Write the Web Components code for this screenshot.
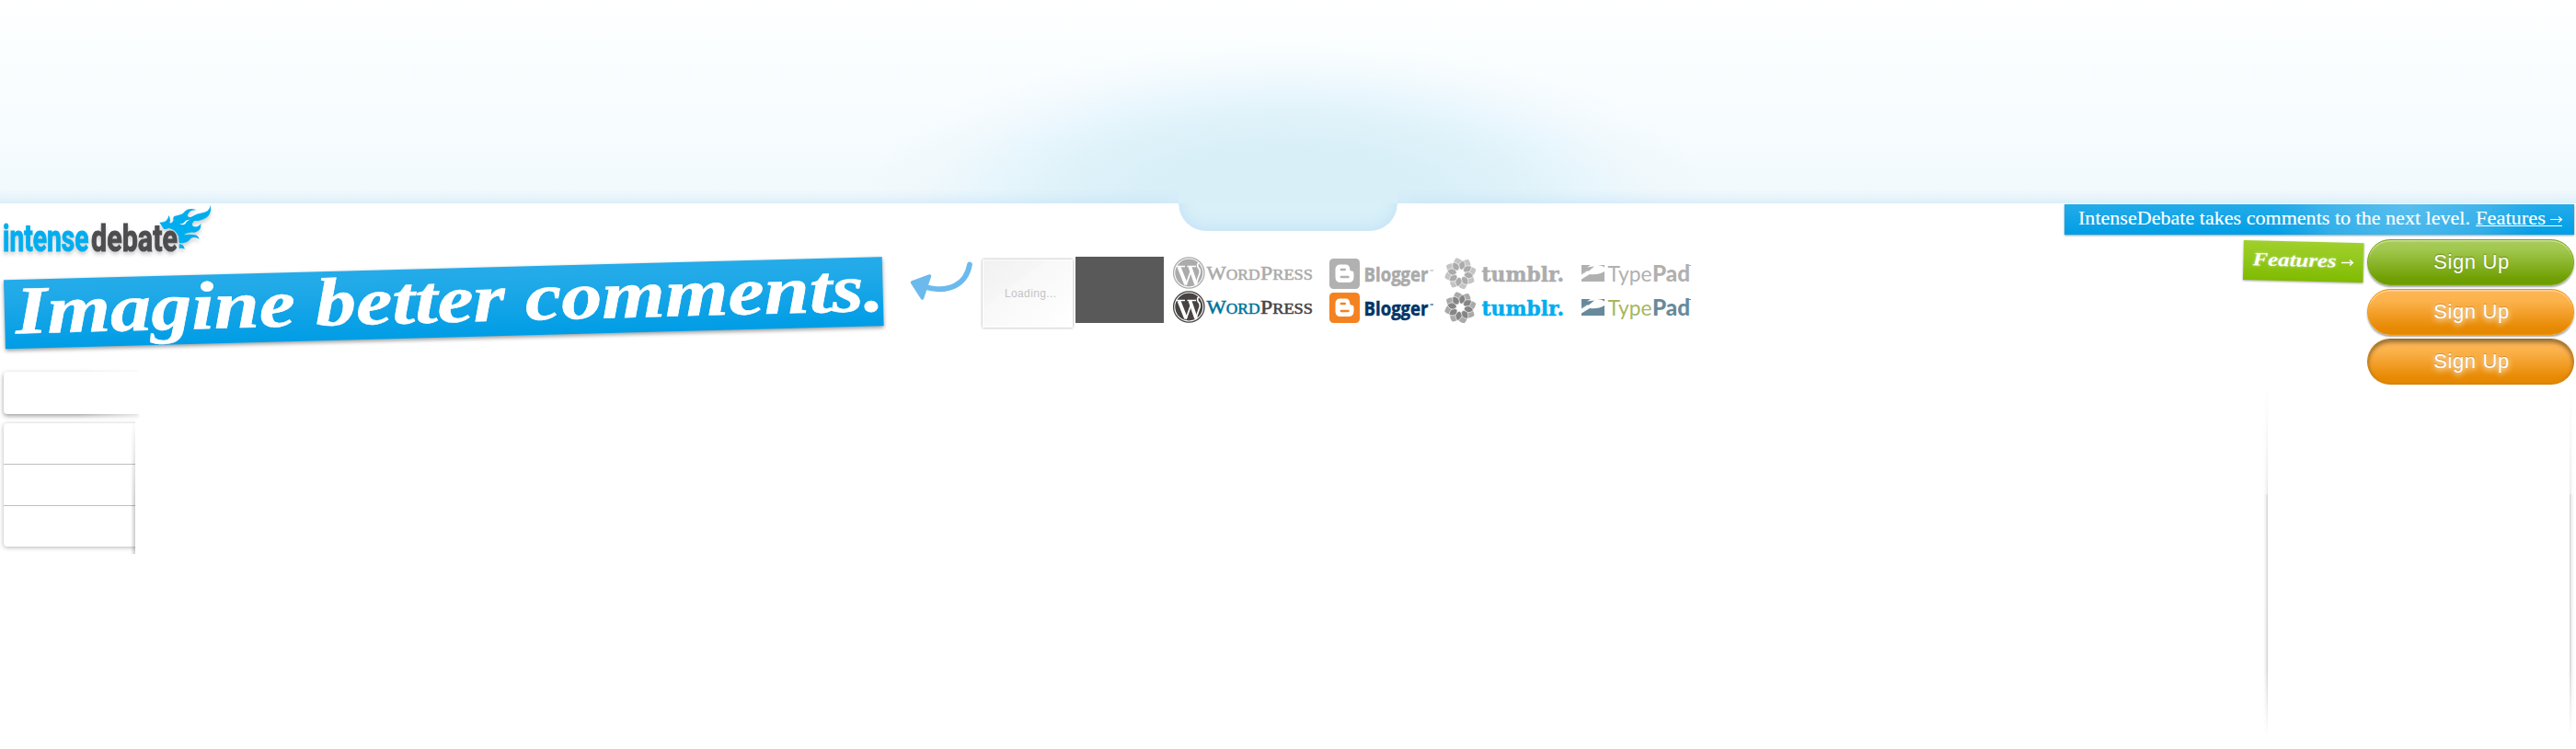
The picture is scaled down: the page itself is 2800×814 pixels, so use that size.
<!DOCTYPE html>
<html lang="en">
<head>
<meta charset="utf-8">
<title>IntenseDebate</title>
<style>
html,body{margin:0;background:#fff;font-family:"Liberation Sans",sans-serif}
body{width:2800px;height:814px;overflow:hidden}
</style>
</head>
<body>
<id-page></id-page>
<script>
const define = (name, css, html) => customElements.define(name, class extends HTMLElement {
  connectedCallback() {
    if (this.shadowRoot) return;
    const t = document.createElement('template');
    t.innerHTML = `<style>:host{display:block;box-sizing:border-box}svg{display:block;overflow:visible}${css}</style>` +
      (typeof html === 'function' ? html(this) : html);
    this.attachShadow({mode: 'open'}).append(t.content.cloneNode(true));
  }
});

/* Sky header with centre glow and hanging tab */
define('id-sky', `
:host{height:221px;position:relative;display:flex;align-items:flex-end;justify-content:space-between;
 background:radial-gradient(ellipse 460px 172px at 1400px 218px,#d8eff8 0,#d8eff8 32%,rgba(216,239,248,.75) 54%,rgba(220,242,252,.5) 71%,rgba(225,241,248,.2) 85%,rgba(240,249,253,0) 100%),
 linear-gradient(#fff 0,#fafeff 25%,#f7fcff 60%,#f1f9fc 100%)}
.edge{width:1281px;height:16px;background:linear-gradient(rgba(190,224,248,0),rgba(190,224,248,.12) 45%,rgba(190,224,248,.42))}
.l{-webkit-mask:linear-gradient(to left,rgba(0,0,0,.5),#000 30px)}
.r{-webkit-mask:linear-gradient(to right,rgba(0,0,0,.5),#000 30px)}
.tab{position:absolute;left:1281px;top:221px;width:238px;height:30px;overflow:hidden;border-radius:0 0 30px 30px}
.tab i{display:block;margin-top:-50px;height:80px;border-radius:0 0 30px 30px;background:#d9f0f8;box-shadow:inset 0 -3px 18px #c3e2f8}`,
`<div class="edge l"></div><div class="edge r"></div><div class="tab"><i></i></div>`);

define('id-logo', `:host{width:240px;height:54px}text{font:700 40px Roboto,sans-serif}svg{filter:drop-shadow(0 3px 2px rgba(0,0,0,.2))}`,
`<svg width="240" height="54" viewBox="0 221 240 54">
<text x="3" y="273" textLength="93.500" lengthAdjust="spacingAndGlyphs" fill="#00aeef" stroke="#00aeef" stroke-width="1">intense</text>
<text x="99" y="273" textLength="94" lengthAdjust="spacingAndGlyphs" fill="#4d4d4f" stroke="#4d4d4f" stroke-width="1">debate</text>
<g transform="translate(0 210) scale(.33333)"><path fill="#00aeef" d="M520 95Q548 96 550 72Q558 84 553 97Q562 99 566 88Q560 74 580 72Q596 70 604 58Q618 46 641 55Q620 54 613 68Q608 78 622 78Q642 66 660 64Q684 60 686 39Q692 66 672 80Q650 92 634 90Q622 100 630 108Q644 112 650 104Q656 100 654 96Q660 122 634 128Q612 126 600 136Q620 132 636 136Q646 138 650 149Q634 140 622 148Q610 166 584 162L582 140Q572 118 550 114Q540 118 534 116Q526 104 520 95ZM584 166Q600 166 602 182Q594 178 584 180Z"/>
<path fill="#fff" d="M582 96Q590 103 600 96Q606 86 620 86Q608 90 605 99Q594 108 582 96Z"/></g></svg>`);

define('id-banner', `:host{width:980px;height:129px}text{font:italic 700 74px "Liberation Serif",serif}`,
`<svg width="980" height="129" viewBox="0 275 980 129"><defs><linearGradient id="g" x2="0" y2="1"><stop stop-color="#25abe9"/><stop offset=".25" stop-color="#20a9e8"/><stop offset=".85" stop-color="#069fe6"/><stop offset="1" stop-color="#009de5"/></linearGradient></defs>
<g transform="translate(4 304.300) rotate(-1.51)"><rect width="955" height="75" fill="url(#g)" style="filter:drop-shadow(0 2px 2px rgba(0,0,0,.4))"/>
<text x="12" y="58.500" textLength="944" lengthAdjust="spacingAndGlyphs" fill="#fff" stroke="#fff" stroke-width=".6">Imagine better comments.</text></g></svg>`);

define('id-arrow', `:host{width:86px;height:129px}`,
`<svg width="86" height="129" viewBox="980 275 86 129"><path d="M1006 312C1032 319 1050 309 1054 287.500" fill="none" stroke="#6cbaed" stroke-width="5.800" stroke-linecap="round"/><path d="M991.500 307L1010.500 300L1002.500 324Z" fill="#6cbaed" stroke="#6cbaed" stroke-width="3.500" stroke-linejoin="round"/></svg>`);

define('id-loading', `:host{width:103px;height:129px}text{font:12px "Liberation Sans",sans-serif}`,
`<svg width="103" height="129" viewBox="1066 275 103 129"><defs><linearGradient id="g" x2="1" y2="1"><stop stop-color="#f1f1f1"/><stop offset=".35" stop-color="#f6f6f6"/><stop offset=".36" stop-color="#f8f8f8"/><stop offset="1" stop-color="#fff"/></linearGradient></defs>
<rect x="1068" y="282" width="98" height="74" fill="#fff" style="filter:drop-shadow(0 0 1.500px rgba(0,0,0,.38))"/><rect x="1069" y="283" width="96" height="72" fill="url(#g)"/>
<text x="1092" y="323" textLength="56" fill="#c4c4c4">Loading...</text></svg>`);

define('id-swatch', `:host{width:96px;height:72px;margin-top:4px;background:#595959}`, ``);

/* Platform marks; the "color" attribute switches grey to brand colours */
const pal = (e, grey, brand) => e.hasAttribute('color') ? brand : grey;
define('id-wordpress', `:host{width:160px;height:37px}text{font-family:"Liberation Serif",serif}`, e => {
 const a = pal(e,'#ababab','#00749a'), b = pal(e,'#ababab','#464342');
 return `<svg width="160" height="37" viewBox="0 0 160 37"><circle cx="17.300" cy="17.500" r="16.700" fill="#fff" stroke="${b}" stroke-width="1.300"/><circle cx="17.300" cy="17.500" r="15" fill="${b}"/>
<g fill="none" stroke="#fff"><path d="M3.500 10.500H13M15.500 10.500H25" stroke-width="1.500"/><path d="M6.500 11L14 30M18.500 11L25 30" stroke-width="3.800"/><path d="M14 31L19.500 15.500M24.500 31L29 18Q30 14 27.500 12Q25.500 9 28 6.500" stroke-width="1.700"/></g>
<g stroke-width=".55"><text x="36.500" y="25" textLength="58" lengthAdjust="spacingAndGlyphs" font-size="22" fill="${a}" stroke="${a}">W<tspan font-size="17">ORD</tspan></text>
<text x="95" y="25" textLength="57" lengthAdjust="spacingAndGlyphs" font-size="22" fill="${b}" stroke="${b}">P<tspan font-size="17">RESS</tspan></text></g></svg>`;});

define('id-blogger', `:host{width:120px;height:37px}text{font:700 21px "Open Sans",sans-serif}`, e => {
 const a = pal(e,'#b1b1b1','#f58220'), b = pal(e,'#aaa','#003466');
 return `<svg width="120" height="37" viewBox="0 0 120 37"><rect y="2" width="33" height="33" rx="4.500" fill="${a}"/>
<path d="M12 8.500H17.500Q22.300 8.500 22.300 14Q22.300 15.600 24 15.600Q26.500 15.600 26.500 18V22Q26.500 28 20.500 28H12Q6.500 28 6.500 22V14Q6.500 8.500 12 8.500Z" fill="#fff"/><path d="M12.800 14H16.800M12.800 22H20.500" stroke="${a}" stroke-width="2.400" stroke-linecap="round"/>
<text x="37.500" y="27" textLength="70" lengthAdjust="spacingAndGlyphs" fill="${b}" stroke="${b}" stroke-width=".5">Blogger</text><path d="M109.500 15h3.500" stroke="${b}" stroke-width="1"/></svg>`;});

define('id-tumblr', `:host{width:142px;height:37px}text{font:700 22.500px "DejaVu Serif",serif}`, e => {
 const o = pal(e,'#c4c4c4','#a9a9a9'), i = pal(e,'#ababab','#858585'), t = pal(e,'#acacac','#00adef');
 let p = '';
 for (let k = 0; k < 8; k++) p += `<path transform="rotate(${k*45-10})" d="M0 -5C-7 -8 -7 -13 -1.500 -17.500C6 -15 7 -9 0 -5Z" fill="${o}"/>`;
 for (let k = 0; k < 8; k++) p += `<path transform="rotate(${k*45+12})" d="M0 -4C-5 -6.500 -4.500 -11 0 -14.500C4.500 -11 5 -6.500 0 -4Z" fill="${i}" stroke="#fff" stroke-width=".6"/>`;
 return `<svg width="142" height="37" viewBox="0 0 142 37"><g transform="translate(17.300 18.300)">${p}</g>
<text x="40.500" y="27" textLength="89.500" lengthAdjust="spacingAndGlyphs" fill="${t}" stroke="${t}" stroke-width=".5">tumblr.</text></svg>`;});

define('id-typepad', `:host{width:125px;height:37px}text{font:400 24px Lato,sans-serif}.b{font-weight:900}`, e => {
 const a = pal(e,'#b0b0b0','#a8b75c'), b = pal(e,'#b0b0b0','#668a9c');
 return `<svg width="125" height="37" viewBox="0 0 125 37"><path d="M0 9H10L6 11.500L14 10.500L8 15.500Q3 15 0 19ZM16 9H25V11.500Q22 8.500 16 9ZM0 27V24.500L9 19Q18 20 25 16V27Z" fill="${b}"/><path d="M0 19L5 16" stroke="${b}"/>
<text x="28.500" y="27" textLength="48" lengthAdjust="spacingAndGlyphs" fill="${a}">Type</text><text class="b" x="77" y="27" textLength="41" lengthAdjust="spacingAndGlyphs" fill="${b}">Pad</text><path d="M115 9.500h4" stroke="${b}"/></svg>`;});

define('id-platforms', `:host{padding:4px 0 0 10px}div{display:flex}`,
`<div><id-wordpress></id-wordpress><id-blogger style="margin-left:10px"></id-blogger><id-tumblr style="margin-left:5px"></id-tumblr><id-typepad style="margin-left:7px"></id-typepad></div>
<div><id-wordpress color></id-wordpress><id-blogger color style="margin-left:10px"></id-blogger><id-tumblr color style="margin-left:5px"></id-tumblr><id-typepad color style="margin-left:7px"></id-typepad></div>`);

/* Menu panels, cut off on the right */
define('id-menu', `:host{width:160px;height:210px}
.clip{overflow:hidden;padding:4px 0 8px 4px}
.a{width:152px;height:56px;margin-top:-4px;box-sizing:border-box;-webkit-mask:linear-gradient(to right,#000 55%,rgba(0,0,0,.35) 98%,transparent)}
.a i{display:block;width:180px;height:46px;border-radius:4px;background:#fff;box-shadow:0 2px 5px rgba(0,0,0,.4)}
.b{position:relative;width:143px}
.b div{border-radius:4px 0 0 4px;background:#fff;box-shadow:0 1px 5px rgba(0,0,0,.3);width:160px}
.b i{display:block;height:44px;border-bottom:1px solid #bfbfbf}.b i:last-child{border:0}
.b::after{content:"";position:absolute;right:0;top:0;bottom:0;width:5px;background:linear-gradient(to right,rgba(0,0,0,0),rgba(0,0,0,.2));-webkit-mask:linear-gradient(transparent,rgba(0,0,0,.35) 15%,#000 60%)}`,
`<div class="clip a"><i></i></div><div class="clip b"><div><i></i><i></i><i></i></div></div>`);

define('id-notice', `:host{width:556px;height:37px}text{font:21px "Liberation Serif",serif}`,
`<svg width="556" height="37" viewBox="2244 221 556 37"><defs><linearGradient id="g" x2="0" y2="1"><stop stop-color="#24abe9"/><stop offset="1" stop-color="#009ee6"/></linearGradient><radialGradient id="r" gradientUnits="userSpaceOnUse" cx="2615" cy="220" r="150"><stop stop-color="#6cc6f0" stop-opacity=".75"/><stop offset=".6" stop-color="#55bbec" stop-opacity=".55"/><stop offset="1" stop-color="#30aeea" stop-opacity="0"/></radialGradient></defs>
<rect x="2244" y="222" width="554" height="33" fill="url(#g)" style="filter:drop-shadow(0 1px 1px rgba(0,0,0,.4))"/><rect x="2244" y="222" width="554" height="33" fill="url(#r)"/>
<g fill="#fff" stroke="#fff" stroke-width=".15"><text x="2259" y="244" textLength="426" lengthAdjust="spacingAndGlyphs">IntenseDebate takes comments to the next level.</text><text x="2691" y="244" textLength="76" lengthAdjust="spacingAndGlyphs">Features</text></g>
<path d="M2691 245.500H2785M2772 238.500H2784M2781 235.500L2784.500 238.500L2781 241.500" fill="none" stroke="#fff" stroke-width="1.200"/></svg>`);

define('id-features', `:host{width:136px;height:54px}text{font:italic 700 20.500px "Liberation Serif",serif;text-shadow:0 0 3px rgba(255,255,255,.5)}`,
`<svg width="136" height="54" viewBox="2436 258 136 54"><defs><linearGradient id="g" x2="0" y2="1"><stop stop-color="#a0d02c"/><stop offset=".45" stop-color="#92c81b"/><stop offset="1" stop-color="#7fba00"/></linearGradient></defs>
<g transform="translate(2439 261) rotate(1.400)"><rect width="130.500" height="43" fill="url(#g)" style="filter:drop-shadow(0 1px 1px rgba(0,0,0,.35))"/></g>
<text transform="translate(2448.500 288.200) rotate(1.500)" textLength="91" lengthAdjust="spacingAndGlyphs" fill="#fff">Features</text>
<path d="M2545 285.500H2557M2554 282.500L2557.500 285.500L2554 288.500" fill="none" stroke="#fff" stroke-width="1.400"/></svg>`);

define('id-button', `
:host{width:225px;height:50px;border-radius:25px;display:flex;align-items:center;justify-content:center;color:#fff;font:22px "Liberation Sans",sans-serif;letter-spacing:.6px;
 background:linear-gradient(#a9cb5c,#a2c84f 20%,#6f9f02 88%,#6d9c00);border:1px solid #75a70a;box-shadow:inset 0 1.500px 1px rgba(255,255,255,.4),0 2px 2px rgba(0,0,0,.35);text-shadow:0 -1px 1px rgba(60,90,0,.5)}
:host([tone=orange]){background:linear-gradient(#fdb757,#fcb24b 25%,#e88a04 85%,#e58800);border-color:#ef9405;text-shadow:0 -1px 1px rgba(150,80,0,.4),0 2px 6px #fff}
:host([pressed]){border-color:#a86608 #c67a0a #d88206;box-shadow:inset 0 3px 4px rgba(90,70,40,.65)}
span{padding:0 0 1px 2px}`, `<span><slot></slot></span>`);

/* Pair of fading vertical shadows framing the column */
define('id-rails', `:host{width:339px;height:396px;display:flex;justify-content:space-between;margin:2px 1px 0 0}
i{width:5px;-webkit-mask:linear-gradient(transparent 0,rgba(0,0,0,.5) 29.500%,rgba(0,0,0,.95) 30%,#000 78%,transparent 97%)}
.l{background:linear-gradient(to right,transparent,rgba(0,0,0,.05) 50%,rgba(0,0,0,.19))}
.r{margin-right:1px;background:linear-gradient(to left,transparent,rgba(0,0,0,.05) 50%,rgba(0,0,0,.19))}`, `<i class="l"></i><i class="r"></i>`);

define('id-page', `:host{width:2800px;height:814px}
main{display:flex;justify-content:space-between;height:593px}
.left{display:flex;flex-direction:column}.row{display:flex;height:129px}
.right{display:flex;flex-direction:column;align-items:flex-end}
.cta{display:flex;align-items:flex-start;padding-right:2px}.btns{display:flex;flex-direction:column;gap:4px;padding:2px 0 0 1px}`,
`<id-sky></id-sky><main>
<div class="left"><id-logo></id-logo><div class="row"><id-banner></id-banner><id-arrow></id-arrow><id-loading></id-loading><id-swatch></id-swatch><id-platforms></id-platforms></div><id-menu></id-menu></div>
<div class="right"><id-notice></id-notice><div class="cta"><id-features></id-features><div class="btns"><id-button>Sign Up</id-button><id-button tone="orange">Sign Up</id-button><id-button tone="orange" pressed>Sign Up</id-button></div></div><id-rails></id-rails></div></main>`);
</script>
</body>
</html>
